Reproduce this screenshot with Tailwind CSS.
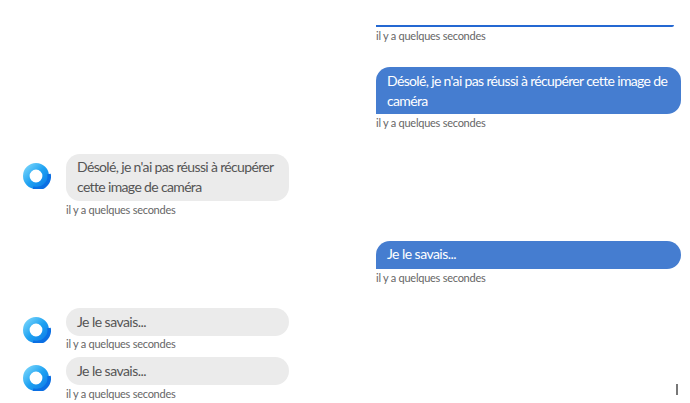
<!DOCTYPE html>
<html lang="fr">
<head>
  <meta charset="UTF-8" />
  <title>Chat</title>
  <script src="https://cdn.jsdelivr.net/npm/@tailwindcss/browser@4"></script>
</head>
<body class="bg-white overflow-hidden h-[403px] relative font-['Lato',sans-serif]">

  <svg width="0" height="0" class="absolute">
    <defs>
      <linearGradient id="ringGrad" x1="0" y1="0" x2="1" y2="1">
        <stop offset="0" stop-color="#6fd0fa" />
        <stop offset="0.5" stop-color="#1fa2f2" />
        <stop offset="1" stop-color="#0f7fe8" />
      </linearGradient>
      <symbol id="logo" viewBox="0 0 28 26">
        <circle cx="13" cy="13" r="9.7" fill="none" stroke="url(#ringGrad)" stroke-width="6.6" />
        <path d="M26 11 A 12.4 12.4 0 0 1 10 25" fill="none" stroke="#0b6fe3" stroke-width="3.6" />
      </symbol>
    </defs>
  </svg>

  <div class="flex flex-col pl-[23px] pr-[9px]">

    <!-- user, scrolled off the top -->
    <div class="flex flex-col ml-[353px] mb-[23px]">
      <div class="h-[27px] flex items-end">
        <div class="h-[2px] w-[298px] bg-[#2468d2] rounded-br-[6px]"></div>
      </div>
      <p class="h-[17px] text-[11px] leading-[17px] tracking-[-0.25px] text-[#666]">il y a quelques secondes</p>
    </div>

    <div class="flex flex-col ml-[353px] mb-[23px]">
      <div class="h-[47px] bg-[#457dd0] rounded-r-[14px] rounded-tl-[14px] pl-[11px] pr-[10px] pt-[4px] text-[14px] leading-[20px] tracking-[-0.65px] text-white">Désolé, je n'ai pas réussi à récupérer cette image de caméra</div>
      <p class="h-[17px] text-[11px] leading-[17px] tracking-[-0.25px] text-[#666]">il y a quelques secondes</p>
    </div>

    <!-- bot -->
    <div class="flex items-start gap-[15px] mb-[23px]">
      <svg class="w-[28px] h-[26px] mt-[9px] shrink-0"><use href="#logo" /></svg>
      <div class="flex flex-col w-[223px]">
        <div class="h-[47px] bg-[#ebebeb] rounded-[14px] pl-[11px] pr-[10px] pt-[3px] text-[14px] leading-[20px] tracking-[-0.65px] text-[#555]">Désolé, je n'ai pas réussi à récupérer cette image de caméra</div>
        <p class="h-[17px] text-[11px] leading-[17px] tracking-[-0.25px] text-[#666]">il y a quelques secondes</p>
      </div>
    </div>

    <!-- user -->
    <div class="flex flex-col ml-[353px] mb-[22px]">
      <div class="h-[28px] bg-[#457dd0] rounded-[14px] rounded-bl-none pl-[11px] text-[14px] leading-[26px] tracking-[-0.55px] text-white">Je le savais...</div>
      <p class="h-[17px] text-[11px] leading-[17px] tracking-[-0.25px] text-[#666]">il y a quelques secondes</p>
    </div>

    <!-- bot -->
    <div class="flex items-start gap-[15px] mb-[5px]">
      <svg class="w-[28px] h-[26px] mt-[9px] shrink-0"><use href="#logo" /></svg>
      <div class="flex flex-col w-[223px]">
        <div class="h-[28px] bg-[#ebebeb] rounded-[14px] pl-[11px] text-[14px] leading-[28px] tracking-[-0.55px] text-[#555]">Je le savais...</div>
        <p class="h-[16px] text-[11px] leading-[16px] tracking-[-0.25px] text-[#666]">il y a quelques secondes</p>
      </div>
    </div>

    <div class="flex items-start gap-[15px]">
      <svg class="w-[28px] h-[26px] mt-[8px] shrink-0"><use href="#logo" /></svg>
      <div class="flex flex-col w-[223px]">
        <div class="h-[28px] bg-[#ebebeb] rounded-[14px] pl-[11px] text-[14px] leading-[28px] tracking-[-0.55px] text-[#555]">Je le savais...</div>
        <p class="h-[17px] text-[11px] leading-[17px] tracking-[-0.25px] text-[#666]">il y a quelques secondes</p>
      </div>
    </div>
  </div>

  <!-- caret at the corner -->
  <div class="absolute left-[676px] top-[384px] w-[2px] h-[11px] bg-[#777]"></div>
</body>
</html>
